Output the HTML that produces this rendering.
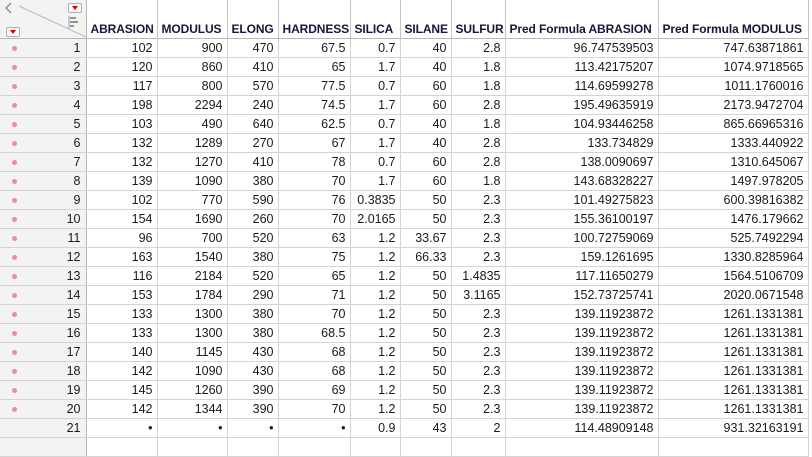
<!DOCTYPE html>
<html><head><meta charset="utf-8"><style>
*{margin:0;padding:0;box-sizing:border-box}
body{width:812px;height:440px;background:#fff;overflow:hidden;font-family:"Liberation Sans",sans-serif;font-size:12.5px;color:#1a1a1a;position:relative}
table{position:absolute;left:0;top:0;border-collapse:collapse;table-layout:fixed;width:808px}
td,th{border-right:1px solid #d4d4d4;border-bottom:1px solid #d4d4d4;height:19px;text-align:right;padding:0 4px 0 0;white-space:nowrap;overflow:hidden;line-height:18px}
th{height:38px;vertical-align:bottom;text-align:left;padding:0 0 1px 4px;line-height:16px;font-weight:bold;color:#16163a;border-right:1px solid #c4c4c4;border-bottom:1px solid #b8b8b8;font-size:12px;letter-spacing:-0.1px}
td.rh{background:#f3f3f3;border-right:1px solid #b8b8b8;position:relative;padding-right:5px}
td.rh .d{position:absolute;left:12px;top:7px;width:5px;height:5px;border-radius:50%;background:#f08c9c}
th.corner{background:#f3f3f3;border-right:1px solid #b8b8b8;padding:0;position:relative}
.dd{position:absolute;width:14px;height:10px;border:1px solid #b0b0b0;border-radius:2px;background:#fafafa}
.dd:after{content:"";position:absolute;left:3px;top:2px;border-left:3.5px solid transparent;border-right:3.5px solid transparent;border-top:4px solid #d00}
</style></head><body>
<table>
<colgroup><col style="width:86px"><col style="width:71px"><col style="width:70px"><col style="width:51px"><col style="width:72px"><col style="width:50px"><col style="width:51px"><col style="width:54px"><col style="width:153px"><col style="width:150px"></colgroup>
<tr><th class="corner">
<svg width="86" height="38" style="position:absolute;left:0;top:0"><line x1="19" y1="6" x2="86" y2="37" stroke="#b8b8c0" stroke-width="1"/><path d="M11 3 L6 8 L11 13" fill="none" stroke="#777" stroke-width="1.2"/>
<line x1="69" y1="16" x2="69" y2="29" stroke="#8aa0c8" stroke-width="1"/><line x1="70" y1="18" x2="76" y2="18" stroke="#8a9a8a" stroke-width="2"/><line x1="70" y1="22" x2="78" y2="22" stroke="#8a9a8a" stroke-width="2"/><line x1="70" y1="26" x2="74" y2="26" stroke="#8a9a8a" stroke-width="2"/></svg>
<div class="dd" style="left:68px;top:3px"></div><div class="dd" style="left:6px;top:27px"></div>
</th><th>ABRASION</th><th>MODULUS</th><th>ELONG</th><th>HARDNESS</th><th>SILICA</th><th>SILANE</th><th>SULFUR</th><th>Pred Formula ABRASION</th><th>Pred Formula MODULUS</th></tr>
<tr><td class="rh"><span class="d"></span>1</td><td>102</td><td>900</td><td>470</td><td>67.5</td><td>0.7</td><td>40</td><td>2.8</td><td>96.747539503</td><td>747.63871861</td></tr>
<tr><td class="rh"><span class="d"></span>2</td><td>120</td><td>860</td><td>410</td><td>65</td><td>1.7</td><td>40</td><td>1.8</td><td>113.42175207</td><td>1074.9718565</td></tr>
<tr><td class="rh"><span class="d"></span>3</td><td>117</td><td>800</td><td>570</td><td>77.5</td><td>0.7</td><td>60</td><td>1.8</td><td>114.69599278</td><td>1011.1760016</td></tr>
<tr><td class="rh"><span class="d"></span>4</td><td>198</td><td>2294</td><td>240</td><td>74.5</td><td>1.7</td><td>60</td><td>2.8</td><td>195.49635919</td><td>2173.9472704</td></tr>
<tr><td class="rh"><span class="d"></span>5</td><td>103</td><td>490</td><td>640</td><td>62.5</td><td>0.7</td><td>40</td><td>1.8</td><td>104.93446258</td><td>865.66965316</td></tr>
<tr><td class="rh"><span class="d"></span>6</td><td>132</td><td>1289</td><td>270</td><td>67</td><td>1.7</td><td>40</td><td>2.8</td><td>133.734829</td><td>1333.440922</td></tr>
<tr><td class="rh"><span class="d"></span>7</td><td>132</td><td>1270</td><td>410</td><td>78</td><td>0.7</td><td>60</td><td>2.8</td><td>138.0090697</td><td>1310.645067</td></tr>
<tr><td class="rh"><span class="d"></span>8</td><td>139</td><td>1090</td><td>380</td><td>70</td><td>1.7</td><td>60</td><td>1.8</td><td>143.68328227</td><td>1497.978205</td></tr>
<tr><td class="rh"><span class="d"></span>9</td><td>102</td><td>770</td><td>590</td><td>76</td><td>0.3835</td><td>50</td><td>2.3</td><td>101.49275823</td><td>600.39816382</td></tr>
<tr><td class="rh"><span class="d"></span>10</td><td>154</td><td>1690</td><td>260</td><td>70</td><td>2.0165</td><td>50</td><td>2.3</td><td>155.36100197</td><td>1476.179662</td></tr>
<tr><td class="rh"><span class="d"></span>11</td><td>96</td><td>700</td><td>520</td><td>63</td><td>1.2</td><td>33.67</td><td>2.3</td><td>100.72759069</td><td>525.7492294</td></tr>
<tr><td class="rh"><span class="d"></span>12</td><td>163</td><td>1540</td><td>380</td><td>75</td><td>1.2</td><td>66.33</td><td>2.3</td><td>159.1261695</td><td>1330.8285964</td></tr>
<tr><td class="rh"><span class="d"></span>13</td><td>116</td><td>2184</td><td>520</td><td>65</td><td>1.2</td><td>50</td><td>1.4835</td><td>117.11650279</td><td>1564.5106709</td></tr>
<tr><td class="rh"><span class="d"></span>14</td><td>153</td><td>1784</td><td>290</td><td>71</td><td>1.2</td><td>50</td><td>3.1165</td><td>152.73725741</td><td>2020.0671548</td></tr>
<tr><td class="rh"><span class="d"></span>15</td><td>133</td><td>1300</td><td>380</td><td>70</td><td>1.2</td><td>50</td><td>2.3</td><td>139.11923872</td><td>1261.1331381</td></tr>
<tr><td class="rh"><span class="d"></span>16</td><td>133</td><td>1300</td><td>380</td><td>68.5</td><td>1.2</td><td>50</td><td>2.3</td><td>139.11923872</td><td>1261.1331381</td></tr>
<tr><td class="rh"><span class="d"></span>17</td><td>140</td><td>1145</td><td>430</td><td>68</td><td>1.2</td><td>50</td><td>2.3</td><td>139.11923872</td><td>1261.1331381</td></tr>
<tr><td class="rh"><span class="d"></span>18</td><td>142</td><td>1090</td><td>430</td><td>68</td><td>1.2</td><td>50</td><td>2.3</td><td>139.11923872</td><td>1261.1331381</td></tr>
<tr><td class="rh"><span class="d"></span>19</td><td>145</td><td>1260</td><td>390</td><td>69</td><td>1.2</td><td>50</td><td>2.3</td><td>139.11923872</td><td>1261.1331381</td></tr>
<tr><td class="rh"><span class="d"></span>20</td><td>142</td><td>1344</td><td>390</td><td>70</td><td>1.2</td><td>50</td><td>2.3</td><td>139.11923872</td><td>1261.1331381</td></tr>
<tr><td class="rh">21</td><td>•</td><td>•</td><td>•</td><td>•</td><td>0.9</td><td>43</td><td>2</td><td>114.48909148</td><td>931.32163191</td></tr>
<tr><td class="rh"></td><td></td><td></td><td></td><td></td><td></td><td></td><td></td><td></td><td></td></tr>
</table>
</body></html>
